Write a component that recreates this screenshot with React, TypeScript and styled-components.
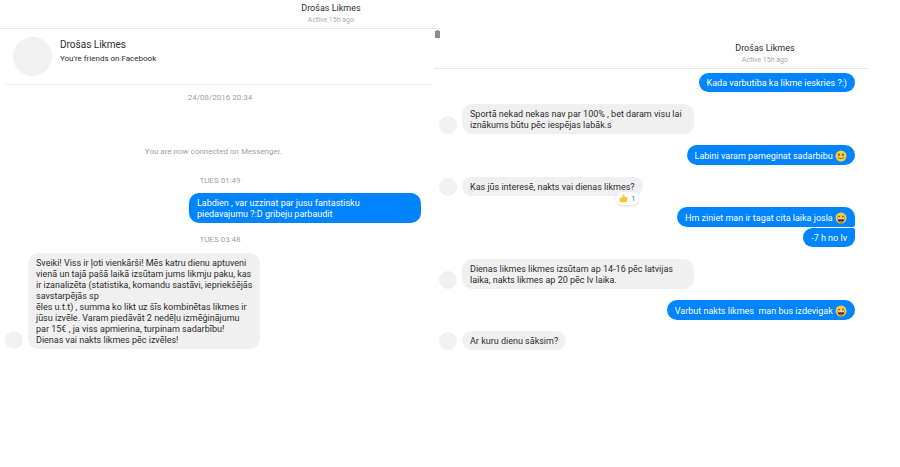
import React from "react";
import styled, { createGlobalStyle } from "styled-components";

const GlobalStyle = createGlobalStyle`
  * { box-sizing: border-box; }
  body {
    margin: 0;
    background: #fff;
    color: #2c2c2c;
    font-family: Roboto, "Open Sans", "Noto Sans", sans-serif;
    font-size: 9px;
    line-height: 11px;
  }
  h1, h2, p { margin: 0; font-weight: 400; }
`;

const Page = styled.main`
  display: grid;
  grid-template-columns: 434fr 434fr 32fr;
  align-items: start;
`;

const Panel = styled.section`
  min-width: 0;
`;

const Header = styled.header`
  display: grid;
  grid-template-columns: 21fr 19fr;
  height: 29px;
  padding-top: 2px;
  border-bottom: 1px solid #e9e9e9;
`;

const HeaderText = styled.div`
  grid-column: 2;
  text-align: center;
`;

const HeaderName = styled.h1`
  font-size: 9px;
  line-height: 12px;
`;

const HeaderStatus = styled.p`
  font-size: 7px;
  line-height: 13px;
  color: #aaa;
`;

const Strip = styled.div`
  height: 40px;
  padding-top: 28px;
`;

const StripEdge = styled.div`
  width: 6px;
  padding: 1px 0 0 1px;
  border-top: 1px solid #ececec;
`;

const StripIcon = styled.svg`
  display: block;
  width: 5px;
  height: 8px;
`;

const Profile = styled.section`
  display: flex;
  gap: 8px;
  height: 56px;
  margin: 0 2px 0 5px;
  padding: 8px;
  border-bottom: 1px solid #ededed;
`;

const Avatar = styled.div<{ $size: number }>`
  flex: none;
  width: ${(p) => p.$size}px;
  height: ${(p) => p.$size}px;
  border-radius: 50%;
  background: #f1f1f1;
`;

const ProfileName = styled.h2`
  font-size: 10px;
  line-height: 16px;
`;

const ProfileNote = styled.p`
  font-size: 8px;
  line-height: 12px;
`;

const Notice = styled.p<{ $gap: number; $shift?: boolean }>`
  margin-top: ${(p) => p.$gap}px;
  padding-left: ${(p) => (p.$shift ? 6 : 0)}px;
  padding-right: ${(p) => (p.$shift ? 0 : 7)}px;
  text-align: center;
  font-size: 8px;
  line-height: 12px;
  color: #a0a0a0;
`;

const Row = styled.div<{ $mine?: boolean; $gap: number }>`
  display: flex;
  justify-content: ${(p) => (p.$mine ? "flex-end" : "flex-start")};
  align-items: flex-end;
  gap: 5px;
  margin-top: ${(p) => p.$gap}px;
  padding: 0 13px 0 5px;
`;

const Bubble = styled.div<{ $mine?: boolean; $wide?: boolean; $join?: "top" | "bottom" }>`
  position: relative;
  width: ${(p) => (p.$wide ? "232px" : "auto")};
  padding: 5px 8px 3px;
  border-radius: 10px;
  border-top-right-radius: ${(p) => (p.$join === "top" ? 2 : 10)}px;
  border-bottom-right-radius: ${(p) => (p.$join === "bottom" ? 2 : 10)}px;
  background: ${(p) => (p.$mine ? "#0084ff" : "#f0f0f0")};
  color: ${(p) => (p.$mine ? "#fff" : "#2c2c2c")};
  white-space: pre;
`;

const Emoji = styled.svg`
  display: inline-block;
  width: 12px;
  height: 12px;
  vertical-align: -3px;
`;

const Reaction = styled.button`
  position: absolute;
  right: 4px;
  bottom: -9px;
  display: flex;
  align-items: center;
  gap: 3px;
  height: 13px;
  padding: 0 3px;
  border: 0;
  border-radius: 7px;
  background: #fff;
  box-shadow: 0 1px 2px rgba(0, 0, 0, 0.15);
  color: #3578e5;
  font-family: inherit;
  font-size: 8px;
  line-height: 13px;
`;

const Thumb = styled.svg`
  width: 9px;
  height: 9px;
`;

function Smile() {
  return (
    <Emoji viewBox="0 0 24 24" role="img" aria-label="smile">
      <circle cx="12" cy="12" r="11" fill="#f9cf3a" />
      <ellipse cx="8" cy="9.5" rx="1.7" ry="2.3" fill="#5b4520" />
      <ellipse cx="16" cy="9.5" rx="1.7" ry="2.3" fill="#5b4520" />
      <path d="M6 15.500Q12 20 18 15.500" fill="none" stroke="#8a6a25" strokeWidth="1.800" strokeLinecap="round" />
    </Emoji>
  );
}

function Grin() {
  return (
    <Emoji viewBox="0 0 24 24" role="img" aria-label="grin">
      <circle cx="12" cy="12" r="11" fill="#f9cf3a" />
      <path d="M5.500 9.500Q7.500 6 9.500 9.500M14.500 9.500Q16.500 6 18.500 9.500" fill="none" stroke="#5b4520" strokeWidth="2" strokeLinecap="round" />
      <path d="M5 12.500H19Q18.500 21 12 21T5 12.500Z" fill="#4d2c1d" />
      <path d="M6 12.500H18V14.500H6Z" fill="#fff" />
      <path d="M8 19Q12 15.500 16 19Q12 22 8 19Z" fill="#e8504a" />
    </Emoji>
  );
}

function PanelHeader() {
  return (
    <Header>
      <HeaderText>
        <HeaderName>Drošas Likmes</HeaderName>
        <HeaderStatus>Active 15h ago</HeaderStatus>
      </HeaderText>
    </Header>
  );
}

type MessageProps = {
  gap: number;
  mine?: boolean;
  wide?: boolean;
  join?: "top" | "bottom";
  children: React.ReactNode;
};

function Message({ gap, mine, wide, join, children }: MessageProps) {
  return (
    <Row $gap={gap} $mine={mine}>
      {!mine && <Avatar $size={18} />}
      <Bubble $mine={mine} $wide={wide} $join={join}>
        {children}
      </Bubble>
    </Row>
  );
}

const OFFER = [
  "Sveiki! Viss ir ļoti vienkārši! Mēs katru dienu aptuveni",
  "vienā un tajā pašā laikā izsūtam jums likmju paku, kas",
  "ir izanalizēta (statistika, komandu sastāvi, iepriekšējās",
  "savstarpējās sp",
  "ēles u.t.t) , summa ko likt uz šīs kombinētas likmes ir",
  "jūsu izvēle. Varam piedāvāt 2 nedēļu izmēģinājumu",
  "par 15€ , ja viss apmierina, turpinam sadarbību!",
  "Dienas vai nakts likmes pēc izvēles!",
].join("\n");

export default function App() {
  return (
    <>
      <GlobalStyle />
      <Page>
        <Panel>
          <PanelHeader />
          <Profile>
            <Avatar $size={39} />
            <div>
              <ProfileName>Drošas Likmes</ProfileName>
              <ProfileNote>You're friends on Facebook</ProfileNote>
            </div>
          </Profile>
          <Notice $gap={7} $shift>24/08/2016 20:34</Notice>
          <Notice $gap={42}>You are now connected on Messenger.</Notice>
          <Notice $gap={17} $shift>TUES 01:49</Notice>
          <Message gap={6} mine wide>
            {"Labdien , var uzzinat par jusu fantastisku\npiedavajumu ?:D gribeju parbaudit"}
          </Message>
          <Notice $gap={11} $shift>TUES 03:48</Notice>
          <Message gap={7} wide>{OFFER}</Message>
        </Panel>
        <Panel>
          <Strip>
            <StripEdge>
              <StripIcon viewBox="0 0 5 8" aria-hidden="true">
                <path d="M1.500 0H3.500V1H5V8H0V1H1.500Z" fill="#8c8c8c" />
              </StripIcon>
            </StripEdge>
          </Strip>
          <PanelHeader />
          <Message gap={4} mine>Kada varbutiba ka likme ieskries ?:)</Message>
          <Message gap={12} wide>
            {"Sportā nekad nekas nav par 100% , bet daram visu lai\niznākums būtu pēc iespējas labāk.s"}
          </Message>
          <Message gap={11} mine>Labini varam pameginat sadarbibu <Smile /></Message>
          <Message gap={12}>
            Kas jūs interesē, nakts vai dienas likmes?
            <Reaction type="button">
              <Thumb viewBox="0 0 18 18" aria-hidden="true">
                <path d="M1 8H5L8 4V1Q8 0 9.500 0Q12 1 11 6H16Q17.500 6.500 16.800 8.500Q17.500 10 16.500 11Q16.800 13 15.500 13.800Q15.500 16 13.500 16.500H6L1 15.500Z" fill="#fbc52d" />
              </Thumb>
              1
            </Reaction>
          </Message>
          <Message gap={11} mine join="bottom">Hm ziniet man ir tagat cita laika josla <Grin /></Message>
          <Message gap={1} mine join="top">-7 h no lv</Message>
          <Message gap={12} wide>
            {"Dienas likmes likmes izsūtam ap 14-16 pēc latvijas\nlaika, nakts likmes ap 20 pēc lv laika."}
          </Message>
          <Message gap={11} mine>{"Varbut nakts likmes  man bus izdevigak "}<Grin /></Message>
          <Message gap={11}>Ar kuru dienu sāksim?</Message>
        </Panel>
      </Page>
    </>
  );
}
